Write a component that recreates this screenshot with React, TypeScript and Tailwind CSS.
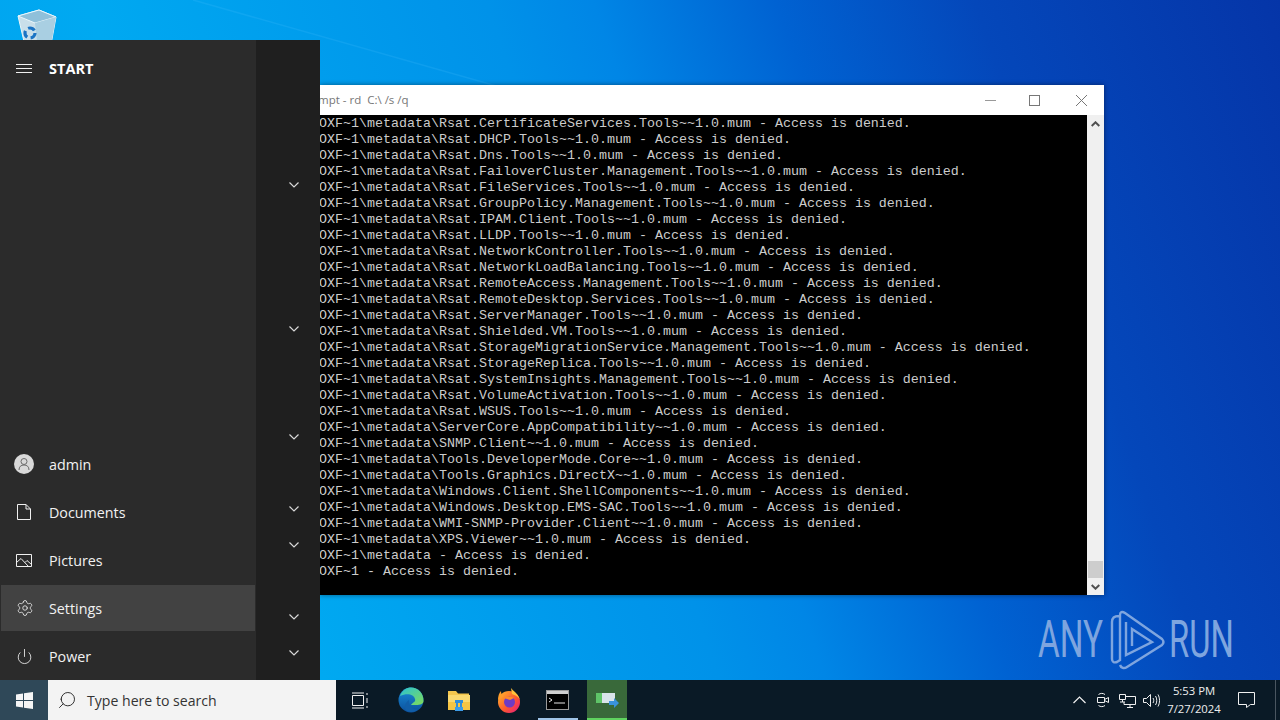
import React from 'react';
import { Power, Search, Settings } from 'lucide-react';

const lines = [
  'OXF~1\\metadata\\Rsat.CertificateServices.Tools~~1.0.mum - Access is denied.',
  'OXF~1\\metadata\\Rsat.DHCP.Tools~~1.0.mum - Access is denied.',
  'OXF~1\\metadata\\Rsat.Dns.Tools~~1.0.mum - Access is denied.',
  'OXF~1\\metadata\\Rsat.FailoverCluster.Management.Tools~~1.0.mum - Access is denied.',
  'OXF~1\\metadata\\Rsat.FileServices.Tools~~1.0.mum - Access is denied.',
  'OXF~1\\metadata\\Rsat.GroupPolicy.Management.Tools~~1.0.mum - Access is denied.',
  'OXF~1\\metadata\\Rsat.IPAM.Client.Tools~~1.0.mum - Access is denied.',
  'OXF~1\\metadata\\Rsat.LLDP.Tools~~1.0.mum - Access is denied.',
  'OXF~1\\metadata\\Rsat.NetworkController.Tools~~1.0.mum - Access is denied.',
  'OXF~1\\metadata\\Rsat.NetworkLoadBalancing.Tools~~1.0.mum - Access is denied.',
  'OXF~1\\metadata\\Rsat.RemoteAccess.Management.Tools~~1.0.mum - Access is denied.',
  'OXF~1\\metadata\\Rsat.RemoteDesktop.Services.Tools~~1.0.mum - Access is denied.',
  'OXF~1\\metadata\\Rsat.ServerManager.Tools~~1.0.mum - Access is denied.',
  'OXF~1\\metadata\\Rsat.Shielded.VM.Tools~~1.0.mum - Access is denied.',
  'OXF~1\\metadata\\Rsat.StorageMigrationService.Management.Tools~~1.0.mum - Access is denied.',
  'OXF~1\\metadata\\Rsat.StorageReplica.Tools~~1.0.mum - Access is denied.',
  'OXF~1\\metadata\\Rsat.SystemInsights.Management.Tools~~1.0.mum - Access is denied.',
  'OXF~1\\metadata\\Rsat.VolumeActivation.Tools~~1.0.mum - Access is denied.',
  'OXF~1\\metadata\\Rsat.WSUS.Tools~~1.0.mum - Access is denied.',
  'OXF~1\\metadata\\ServerCore.AppCompatibility~~1.0.mum - Access is denied.',
  'OXF~1\\metadata\\SNMP.Client~~1.0.mum - Access is denied.',
  'OXF~1\\metadata\\Tools.DeveloperMode.Core~~1.0.mum - Access is denied.',
  'OXF~1\\metadata\\Tools.Graphics.DirectX~~1.0.mum - Access is denied.',
  'OXF~1\\metadata\\Windows.Client.ShellComponents~~1.0.mum - Access is denied.',
  'OXF~1\\metadata\\Windows.Desktop.EMS-SAC.Tools~~1.0.mum - Access is denied.',
  'OXF~1\\metadata\\WMI-SNMP-Provider.Client~~1.0.mum - Access is denied.',
  'OXF~1\\metadata\\XPS.Viewer~~1.0.mum - Access is denied.',
  'OXF~1\\metadata - Access is denied.',
  'OXF~1 - Access is denied.',
];

// top margins of the collapsed group chevrons in the start menu's right column
const chevronMargins = ['mt-[142px]', 'mt-[138px]', 'mt-[102px]', 'mt-[66px]', 'mt-[30px]', 'mt-[66px]', 'mt-[30px]'];

function RecycleBin() {
  return (
    <svg width="40" height="44" viewBox="0 0 40 44" className="absolute left-[17px] top-[8px]">
      <path d="M1 8 L22 2 L39 9 L33 42 L9 42 Z" fill="#c9dfea" stroke="#e9f6fb" strokeWidth="1" />
      <path d="M1 8 L22 2 L39 9 L18 15 Z" fill="#8fc0da" stroke="#e9f6fb" strokeWidth="1" />
      <path d="M18 15 L39 9 L33 42 L21 42 Z" fill="#a9cfe2" />
      <circle cx="13" cy="25" r="5" fill="none" stroke="#1b74c4" strokeWidth="3.2" strokeDasharray="7 3.500" />
    </svg>
  );
}

function StartRow({ icon, label, active }: { icon: React.ReactNode; label: string; active?: boolean }) {
  return (
    <div className={active ? 'mx-px my-px flex h-[46px] items-center bg-[#424242]' : 'flex h-12 items-center'}>
      <div className={active ? 'flex w-[48px] justify-center pr-[1px]' : 'flex w-[49px] justify-center pr-[1px]'}>{icon}</div>
      <span className="pt-[1px] text-[14.3px] text-[#f2f2f2]">{label}</span>
    </div>
  );
}

function StartMenu() {
  return (
    <div className="absolute left-0 top-[40px] flex h-[640px] w-[320px] font-['Open_Sans',sans-serif]">
      <div className="flex w-[256px] flex-col bg-[#2b2b2b]">
        <div className="flex h-[56px] items-center">
          <div className="flex w-[49px] justify-center pr-[1px]">
            <svg width="16" height="14" viewBox="0 0 16 14" stroke="#f0f0f0" strokeWidth="1">
              <path d="M0 3.500H16M0 7.500H16M0 11.500H16" />
            </svg>
          </div>
          <span className="pt-[1px] text-[14.5px] font-bold text-white">START</span>
        </div>
        <div className="flex-1" />
        <StartRow
          label="admin"
          icon={
            <div className="flex h-5 w-5 items-center justify-center rounded-full bg-[#d9d9d9]">
              <svg width="12" height="14" viewBox="0 0 12 14" fill="none" stroke="#6b6b6b" strokeWidth="1">
                <circle cx="6" cy="4.5" r="3" />
                <path d="M1 13c0-3.4 2-5 5-5s5 1.6 5 5" />
              </svg>
            </div>
          }
        />
        <StartRow
          label="Documents"
          icon={
            <svg width="14" height="16" viewBox="0 0 14 16" fill="none" stroke="#f0f0f0" strokeWidth="1">
              <path d="M.5.5H9L13.5 5V15.5H.5ZM9 .5V5H13.5" />
            </svg>
          }
        />
        <StartRow
          label="Pictures"
          icon={
            <svg width="16" height="13" viewBox="0 0 16 13" fill="none" stroke="#f0f0f0" strokeWidth="1">
              <path d="M.5.5H15.5V12.5H.5ZM.5 8.5L5 4.5L12.5 12.5M9 8.5L11 6.5L15.5 10.5" />
            </svg>
          }
        />
        <StartRow label="Settings" active icon={<Settings size={18} strokeWidth={1.1} color="#f0f0f0" />} />
        <StartRow label="Power" icon={<Power size={17} strokeWidth={1.2} color="#f0f0f0" />} />
      </div>
      <div className="flex w-[64px] flex-col items-center bg-[#1f1f1f] pl-[12px]">
        {chevronMargins.map((m, i) => (
          <svg key={i} width="10" height="6" viewBox="0 0 10 6" fill="none" stroke="#d8d8d8" strokeWidth="1.200" className={m}>
            <path d="M.5 .5L5 5L9.500 .5" />
          </svg>
        ))}
      </div>
    </div>
  );
}

function ConsoleWindow() {
  return (
    <div className="absolute left-[320px] top-[85px] flex h-[510px] w-[784px] flex-col bg-white shadow-[0_0_5px_rgba(0,0,0,0.45)]">
      <div className="flex h-[30px] items-center justify-between">
        <span className="-ml-[2px] whitespace-pre font-['Open_Sans',sans-serif] text-[11.5px] text-[#777777]">{'mpt - rd  C:\\ /s /q'}</span>
        <div className="flex items-center">
          <div className="flex h-[30px] w-[46px] items-center justify-center pl-[2px]">
            <div className="h-px w-[11px] bg-[#999999]" />
          </div>
          <div className="flex h-[30px] w-[46px] items-center justify-center pr-[1px]">
            <div className="h-[11px] w-[11px] border border-[#777777]" />
          </div>
          <div className="flex h-[30px] w-[46px] items-center justify-center">
            <svg width="11" height="11" viewBox="0 0 11 11" stroke="#777777" strokeWidth="1">
              <path d="M0 0L11 11M11 0L0 11" />
            </svg>
          </div>
        </div>
      </div>
      <div className="flex flex-1 overflow-hidden">
        <div className="flex-1 overflow-hidden bg-black pt-[1px] font-['Liberation_Mono',monospace] text-[13.33px] leading-4 text-[#cccccc]">
          {lines.map((l, i) => (
            <div key={i} className="-ml-[1px] h-4 whitespace-pre">
              {l}
            </div>
          ))}
        </div>
        <div className="flex w-[17px] flex-col items-center justify-between bg-[#f0f0f0]">
          <div className="flex h-[18px] items-center justify-center">
            <svg width="9" height="6" viewBox="0 0 9 6" fill="none" stroke="#505050" strokeWidth="2">
              <path d="M.7 5L4.5 1.3L8.3 5" />
            </svg>
          </div>
          <div className="flex flex-col items-center">
            <div className="h-[17px] w-[15px] bg-[#cdcdcd]" />
            <div className="flex h-[17px] items-center justify-center">
              <svg width="9" height="6" viewBox="0 0 9 6" fill="none" stroke="#505050" strokeWidth="2">
                <path d="M.7 1L4.5 4.7L8.3 1" />
              </svg>
            </div>
          </div>
        </div>
      </div>
    </div>
  );
}

function Watermark() {
  return (
    <div className="absolute left-[1038px] top-[610px] flex h-[60px] items-center font-['Roboto',sans-serif] text-[#7ea5df]">
      <span className="w-[72px] origin-left scale-x-[0.64] text-[52px] leading-none">ANY</span>
      <svg width="56" height="62" viewBox="0 0 56 62" fill="none" stroke="#7ea5df" strokeWidth="2.4" className="shrink-0">
        <path d="M9 7C4 7 2 9 2 13V50C2 53 4 54 7 53L10 51V6C10 3 12 2 15 4L52 30C54 32 54 34 52 36L17 58C14 60 11 59 10 56" />
        <path d="M16 13V46L42 33L22 20V37" />
      </svg>
      <span className="ml-[3px] origin-left scale-x-[0.63] text-[52px] leading-none">RUN</span>
    </div>
  );
}

function TaskIcons() {
  return (
    <>
      <div className="flex w-[48px] items-center justify-center">
        <svg width="17" height="17" viewBox="0 0 17 17" fill="none" stroke="#f0f0f0" strokeWidth="1">
          <path d="M.5 3.5H11.5V13.5H.5ZM0 1H12M0 16H12M15 1V3M15 6V11M15 14V16" />
        </svg>
      </div>
      <div className="flex w-[50px] items-center justify-center pl-[4px]">
        <svg width="26" height="26" viewBox="0 0 26 26">
          <defs>
            <linearGradient id="edgeA" x1="0" y1="0" x2="1" y2="1">
              <stop offset="0" stopColor="#2bc3d2" />
              <stop offset="1" stopColor="#7fdb5a" />
            </linearGradient>
            <linearGradient id="edgeB" x1="0" y1="0" x2="0" y2="1">
              <stop offset="0" stopColor="#1a8fd8" />
              <stop offset="1" stopColor="#0b4f9c" />
            </linearGradient>
          </defs>
          <circle cx="13" cy="13" r="12.5" fill="url(#edgeB)" />
          <path d="M2 9C4 3 9 .5 13 .5C20 .5 25.500 6 25.500 14C25.500 17 22 18 18 18H13C15 15 18 15 17 12C16 8 10 5.500 2 9Z" fill="url(#edgeA)" />
          <path d="M11 13C10 18 14 23 20 22.500C17 25 12 26 8 23.500C6 21 7 15 11 13Z" fill="#115ea8" />
        </svg>
      </div>
      <div className="flex w-[48px] items-center justify-center pl-[2px]">
        <svg width="24" height="21" viewBox="0 0 24 21">
          <path d="M1 1H9L11 3.500H22V7H1Z" fill="#f4c64d" />
          <path d="M1 5H23V20H1Z" fill="#fbd96f" />
          <path d="M1 12H23V20H1Z" fill="#f6c544" />
          <path d="M8 10H16V13H8Z" fill="#2f8ddb" />
          <path d="M9 13H11V20H9ZM13 13H15V20H13Z" fill="#2f8ddb" />
          <path d="M8 17H16V21H8Z" fill="#3c9ce8" />
        </svg>
      </div>
      <div className="flex w-[50px] items-center justify-center pl-[4px]">
        <svg width="24" height="25" viewBox="0 0 24 25">
          <defs>
            <linearGradient id="fox" x1="0" y1="0" x2="1" y2="1">
              <stop offset="0" stopColor="#ffbd2e" />
              <stop offset="0.55" stopColor="#ff5a2c" />
              <stop offset="1" stopColor="#e31587" />
            </linearGradient>
          </defs>
          <circle cx="12" cy="14" r="11" fill="url(#fox)" />
          <path d="M14 0C16 3 21 5 23 12C22 9 18 7 15 6Z" fill="#ffc23a" />
          <path d="M1 12C1 8 2 5 4 3C4 6 5 7 7 8Z" fill="#ff9d2b" />
          <circle cx="12.500" cy="14" r="5.500" fill="#6e3bc4" />
          <path d="M7 10C10 8 14 8 17 10L13 12Z" fill="#ff8a2a" />
        </svg>
      </div>
      <div className="relative flex w-[52px] items-center justify-center pr-[2px]">
        <div className="flex h-[20px] w-[23px] flex-col border border-[#9a9a9a] bg-black">
          <div className="h-[3px] bg-[#cfcfcf]" />
          <svg width="21" height="15" viewBox="0 0 21 15" stroke="#e8e8e8" strokeWidth="1" fill="none">
            <path d="M2 4L5 6L2 8M7 9H18" />
          </svg>
        </div>
        <div className="absolute bottom-0 left-1/2 h-[2px] w-[40px] -translate-x-1/2 bg-[#9fc4e8]" />
      </div>
      <div className="relative ml-[3px] flex w-[40px] items-center justify-center bg-[#39693a]">
        <svg width="24" height="20" viewBox="0 0 24 20">
          <path d="M1 3H20V13H1Z" fill="#d9e4ea" />
          <path d="M1 3H7V13H1Z" fill="#5fc468" />
          <path d="M14 11H19V8L24 13L19 18V15H14Z" fill="#3a92dc" />
        </svg>
        <div className="absolute bottom-0 left-0 h-[2px] w-full bg-[#5fd35f]" />
      </div>
    </>
  );
}

function Tray() {
  return (
    <div className="ml-auto flex items-center">
      <div className="flex w-[24px] justify-center">
        <svg width="13" height="8" viewBox="0 0 13 8" fill="none" stroke="#f0f0f0" strokeWidth="1.2">
          <path d="M.5 7L6.500 1L12.500 7" />
        </svg>
      </div>
      <div className="flex w-[24px] justify-center">
        <svg width="14" height="16" viewBox="0 0 14 16" fill="none" stroke="#f0f0f0" strokeWidth="1">
          <path d="M1.500 5.500H8.500V10.500H1.500ZM8.500 7.500L12.500 5.500V10.500L8.500 8.500M2.500 2.500C4.500 1 7 1 9 2.500M2.500 13.500C4.500 15 7 15 9 13.500" />
        </svg>
      </div>
      <div className="flex w-[24px] justify-center">
        <svg width="17" height="15" viewBox="0 0 17 15" fill="none" stroke="#f0f0f0" strokeWidth="1">
          <path d="M.5 1.500H6.500V6.500H.5ZM3.500 6.500V9M1 9H6M7 3.500H16.500V11.500H5V9M8 14.500H14M11 11.500V14.500" />
        </svg>
      </div>
      <div className="flex w-[24px] justify-center">
        <svg width="17" height="15" viewBox="0 0 17 15" fill="none" stroke="#f0f0f0" strokeWidth="1">
          <path d="M.5 5.500H3.500L7.500 1.500V13.500L3.500 9.500H.5ZM10 5C11 6.500 11 8.500 10 10M12.500 3C14.200 5.500 14.200 9.500 12.500 12M15 1.500C17 5 17 10 15 13.500" />
        </svg>
      </div>
      <div className="flex w-[64px] flex-col items-center pr-[2px] font-['Open_Sans',sans-serif] text-[11.3px] leading-[18px] text-[#eeeeee]">
        <span>5:53 PM</span>
        <span>7/27/2024</span>
      </div>
      <div className="flex w-[39px] justify-center">
        <svg width="17" height="16" viewBox="0 0 17 16" fill="none" stroke="#f0f0f0" strokeWidth="1">
          <path d="M.5.500H16.500V12.500H12.500L8.500 15.500V12.500H.5Z" />
        </svg>
      </div>
      <div className="flex h-[40px] w-[14px] justify-end pr-[4px]">
        <div className="h-full w-px bg-[#4a5660]" />
      </div>
    </div>
  );
}

export default function App() {
  return (
    <div className="relative flex h-[720px] w-[1280px] flex-col overflow-hidden bg-[linear-gradient(71deg,#00a0ee_0%,#00a9f1_22%,#0092e9_48%,#0086e6_55%,#0062d2_67%,#0447ba_80%,#0535a8_100%)]">
      <div className="relative flex-1">
        {/* light beam of the wallpaper */}
        <svg width="520" height="100" viewBox="0 0 520 100" className="absolute left-0 top-0">
          <path d="M193 0L500 87" stroke="#4fc3ff" strokeOpacity="0.18" strokeWidth="1.500" />
        </svg>
        <RecycleBin />
        <Watermark />
        <ConsoleWindow />
        <StartMenu />
      </div>
      <div className="flex h-[40px] bg-[#0a1a26]">
        <div className="flex w-[48px] items-center justify-center bg-[#2f4858]">
          <svg width="17" height="17" viewBox="0 0 17 17" fill="#f5f5f5">
            <path d="M0 2.400L7 1.400V8H0ZM8 1.300L17 0V8H8ZM0 9H7V15.600L0 14.600ZM8 9H17V17L8 15.700Z" />
          </svg>
        </div>
        <div className="flex w-[288px] items-center bg-[#f3f3f3] pl-[9px]">
          <Search size={20} strokeWidth={1.1} color="#222222" className="-scale-x-100" />
          <span className="ml-[10px] pt-[1px] font-['Open_Sans',sans-serif] text-[14.1px] text-[#333333]">Type here to search</span>
        </div>
        <TaskIcons />
        <Tray />
      </div>
    </div>
  );
}
